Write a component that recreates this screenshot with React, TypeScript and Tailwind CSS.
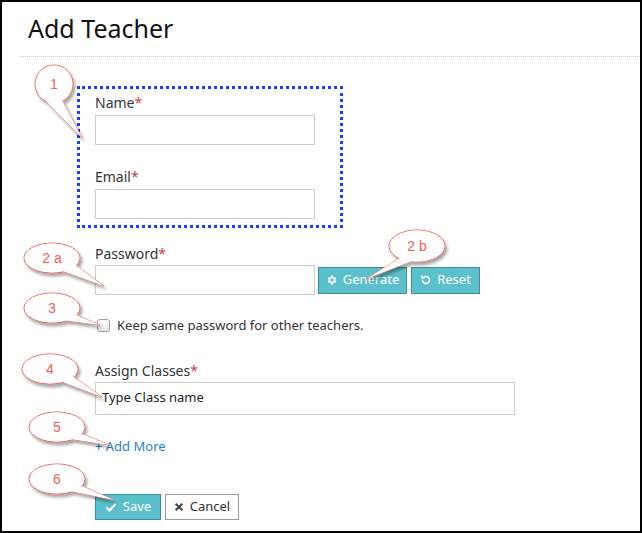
const callouts = [
  { label: "1", cx: 52, cy: 82, rx: 19, ry: 19, tip: [80, 136], b1: [44, 99], b2: [60, 98] },
  { label: "2 a", cx: 50, cy: 256, rx: 28, ry: 15, tip: [102, 284], b1: [58, 268], b2: [72, 262] },
  { label: "2 b", cx: 415, cy: 244, rx: 28, ry: 16, tip: [364, 277], b1: [398, 256], b2: [410, 259] },
  { label: "3", cx: 50, cy: 306, rx: 28, ry: 15, tip: [98, 323], b1: [60, 318], b2: [72, 312] },
  { label: "4", cx: 48, cy: 367, rx: 28, ry: 15, tip: [100, 395], b1: [58, 379], b2: [70, 374] },
  { label: "5", cx: 55, cy: 425, rx: 28, ry: 15, tip: [108, 443], b1: [68, 437], b2: [80, 432] },
  { label: "6", cx: 55, cy: 477, rx: 28, ry: 15, tip: [112, 498], b1: [68, 489], b2: [80, 484] },
];

function Callouts() {
  return (
    <svg className="pointer-events-none absolute left-0 top-0" width="642" height="533">
      <defs>
        <filter id="sh" x="-30%" y="-30%" width="160%" height="160%">
          <feDropShadow dx="2" dy="3" stdDeviation="1.5" floodColor="#000" floodOpacity="0.35" />
        </filter>
      </defs>
      {callouts.map((c) => {
        const tail = `M${c.b1[0]} ${c.b1[1]} L${c.tip[0]} ${c.tip[1]} L${c.b2[0]} ${c.b2[1]} Z`;
        return (
          <g key={c.label}>
            <g filter="url(#sh)">
              <path d={tail} fill="#fff" stroke="#e8625a" strokeWidth="1" />
              <ellipse cx={c.cx} cy={c.cy} rx={c.rx} ry={c.ry} fill="#fff" stroke="#e8625a" strokeWidth="1" />
            </g>
            <path d={tail} fill="#fff" stroke="none" />
            <ellipse cx={c.cx} cy={c.cy} rx={c.rx - 0.6} ry={c.ry - 0.6} fill="#fff" />
            <text x={c.cx} y={c.cy + 5} textAnchor="middle" fontSize="14" fill="#e8625a" fontFamily="Liberation Sans, sans-serif">
              {c.label}
            </text>
          </g>
        );
      })}
    </svg>
  );
}

const Star = () => <span className="text-[#b94a48]">*</span>;

const Input = ({ w = "w-[220px]", h = "h-[30px]", children }: { w?: string; h?: string; children?: React.ReactNode }) => (
  <div className={`${w} ${h} border border-[#cccccc] bg-white flex items-center px-[6px] text-[13px] text-[#222] font-['Liberation_Sans',sans-serif]`}>
    {children}
  </div>
);

export default function App() {
  return (
    <div className="relative w-[642px] h-[533px] bg-white border-2 border-black overflow-hidden font-['Open_Sans',sans-serif] text-[#333]">
      <div className="pl-[26px] pt-[10px] text-[25px] leading-[32px] text-[#111]">Add Teacher</div>
      <div className="ml-[18px] mt-[12px] border-t border-dotted border-[#d0d0d0]" />

      <div className="pl-[93px]">
        <div className="-ml-[18px] mt-[29px] w-[266px] h-[142px] border-[3px] border-dotted border-[#1a3ff0] pl-[15px] pt-[4px]">
          <div className="text-[14px] leading-[20px]">Name<Star /></div>
          <div className="mt-[2px]"><Input /></div>
          <div className="mt-[22px] text-[14px] leading-[20px]">Email<Star /></div>
          <div className="mt-[2px]"><Input /></div>
        </div>

        <div className="mt-[16px] text-[14px] leading-[20px]">Password<Star /></div>
        <div className="mt-[1px] flex items-center gap-[3px]">
          <Input />
          <button className="h-[27px] w-[89px] bg-[#5bc0cb] border border-[#3a8f98] text-white text-[13px] font-['Liberation_Sans',sans-serif] flex items-center justify-center gap-[5px]">
            <svg width="12" height="12" viewBox="0 0 24 24" fill="white"><path d="M19.4 13a7.5 7.5 0 0 0 0-2l2.1-1.6-2-3.5-2.5 1a7.6 7.6 0 0 0-1.7-1L15 3h-4l-.4 2.9a7.6 7.6 0 0 0-1.7 1l-2.5-1-2 3.5L6.6 11a7.5 7.5 0 0 0 0 2l-2.2 1.6 2 3.5 2.5-1a7.6 7.6 0 0 0 1.7 1L11 21h4l.4-2.9a7.6 7.6 0 0 0 1.7-1l2.5 1 2-3.5zM13 15.5a3.5 3.5 0 1 1 0-7 3.5 3.5 0 0 1 0 7z" transform="translate(-1 0)"/></svg>
            Generate
          </button>
          <button className="ml-[1px] h-[27px] w-[69px] bg-[#5bc0cb] border border-[#3a8f98] text-white text-[13px] font-['Liberation_Sans',sans-serif] flex items-center justify-center gap-[5px]">
            <svg width="12" height="12" viewBox="0 0 24 24" fill="none" stroke="white" strokeWidth="3.2"><path d="M5 12a7 7 0 1 0 2.2-5.1" /><path d="M4 3v5h5" /></svg>
            Reset
          </button>
        </div>

        <div className="mt-[21px] flex items-center gap-[7px] text-[13px]">
          <span className="ml-[2px] w-[13px] h-[13px] rounded-[3px] border border-[#a0a0a0] bg-gradient-to-b from-white to-[#e8e8e8]" />
          Keep same password for other teachers.
        </div>

        <div className="mt-[25px] text-[14px] leading-[20px]">Assign Classes<Star /></div>
        <div className="mt-[1px]"><Input w="w-[420px]" h="h-[33px]">Type Class name</Input></div>

        <div className="mt-[22px] text-[13px] text-[#2a7ec5]">+ Add More</div>

        <div className="mt-[38px] flex gap-[4px]">
          <button className="h-[26px] w-[66px] bg-[#5bc0cb] border border-[#3a8f98] text-white text-[13px] font-['Liberation_Sans',sans-serif] flex items-center justify-center gap-[6px]">
            <svg width="12" height="12" viewBox="0 0 24 24" fill="none" stroke="white" strokeWidth="4"><path d="M3 13l6 6L21 6" /></svg>
            Save
          </button>
          <button className="h-[26px] w-[74px] bg-white border border-[#999] text-[#333] text-[13px] font-['Liberation_Sans',sans-serif] flex items-center justify-center gap-[6px]">
            <svg width="10" height="10" viewBox="0 0 24 24" fill="none" stroke="#444" strokeWidth="5"><path d="M4 4l16 16M20 4L4 20" /></svg>
            Cancel
          </button>
        </div>
      </div>

      <Callouts />
    </div>
  );
}
